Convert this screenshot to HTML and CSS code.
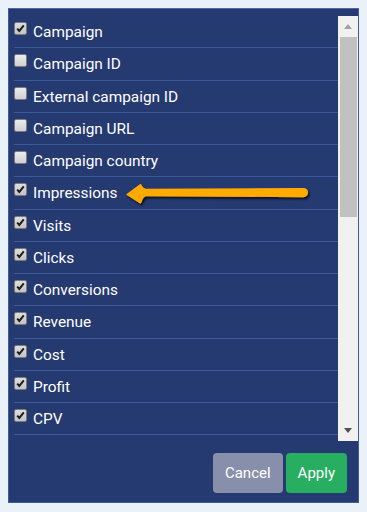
FILE: index.html
```html
<!DOCTYPE html>
<html>
<head>
<meta charset="utf-8">
<link rel="stylesheet" href="styles.css">
</head>
<body>
<div class="panel">
  <div class="body">
    <div class="list">
      <div class="row"><span class="cb on"><svg viewBox="0 0 13 13"><path d="M2.6 6.6 L5.1 9.4 L10.4 2.8"/></svg></span><span class="label">Campaign</span></div>
      <div class="row"><span class="cb"></span><span class="label">Campaign ID</span></div>
      <div class="row"><span class="cb"></span><span class="label">External campaign ID</span></div>
      <div class="row"><span class="cb"></span><span class="label">Campaign URL</span></div>
      <div class="row"><span class="cb"></span><span class="label">Campaign country</span></div>
      <div class="row"><span class="cb on"><svg viewBox="0 0 13 13"><path d="M2.6 6.6 L5.1 9.4 L10.4 2.8"/></svg></span><span class="label">Impressions</span></div>
      <div class="row"><span class="cb on"><svg viewBox="0 0 13 13"><path d="M2.6 6.6 L5.1 9.4 L10.4 2.8"/></svg></span><span class="label">Visits</span></div>
      <div class="row"><span class="cb on"><svg viewBox="0 0 13 13"><path d="M2.6 6.6 L5.1 9.4 L10.4 2.8"/></svg></span><span class="label">Clicks</span></div>
      <div class="row"><span class="cb on"><svg viewBox="0 0 13 13"><path d="M2.6 6.6 L5.1 9.4 L10.4 2.8"/></svg></span><span class="label">Conversions</span></div>
      <div class="row"><span class="cb on"><svg viewBox="0 0 13 13"><path d="M2.6 6.6 L5.1 9.4 L10.4 2.8"/></svg></span><span class="label">Revenue</span></div>
      <div class="row"><span class="cb on"><svg viewBox="0 0 13 13"><path d="M2.6 6.6 L5.1 9.4 L10.4 2.8"/></svg></span><span class="label">Cost</span></div>
      <div class="row"><span class="cb on"><svg viewBox="0 0 13 13"><path d="M2.6 6.6 L5.1 9.4 L10.4 2.8"/></svg></span><span class="label">Profit</span></div>
      <div class="row"><span class="cb on"><svg viewBox="0 0 13 13"><path d="M2.6 6.6 L5.1 9.4 L10.4 2.8"/></svg></span><span class="label">CPV</span></div>
      <div class="row"><span class="cb"></span></div>
    </div>
    <div class="scrollbar">
      <div class="sb-btn"><span class="tri up"></span></div>
      <div class="sb-track"><div class="sb-thumb"></div></div>
      <div class="sb-btn"><span class="tri down"></span></div>
    </div>
  </div>
  <div class="footer">
    <button class="btn cancel">Cancel</button>
    <button class="btn apply">Apply</button>
  </div>
  <svg class="arrow" viewBox="0 0 195 36" width="195" height="36">
    <defs>
      <filter id="sh" x="-10%" y="-40%" width="120%" height="180%">
        <feDropShadow dx="1.5" dy="2" stdDeviation="1.2" flood-color="#000" flood-opacity="0.75"/>
      </filter>
    </defs>
    <path filter="url(#sh)" fill="#ffaa00" d="M6 18.6 L19.5 8.4 Q21.5 7.4 21.8 9.6 Q22.6 11.8 26 12.8 L183.5 12 A4.6 4.6 0 0 1 183.5 21.2 L26 20.2 Q22.6 21.6 21.8 25.6 Q21.4 28.2 19.3 27 Z"/>
  </svg>
</div>
</body>
</html>
```

FILE: styles.css
```css
html, body {
  margin: 0;
  padding: 0;
}
body {
  background: #eaf1f9;
  font-family: Roboto, "Liberation Sans", Arial, sans-serif;
}
.panel {
  position: relative;
  margin: 8px;
  width: 351px;
  height: 495px;
  box-sizing: border-box;
  border: 1px solid #3f5b9b;
  border-top-color: #4c68a6;
  background: #253a70;
  padding: 7px 0 0 5px;
  display: flex;
  flex-direction: column;
}
.body {
  display: flex;
  height: 425px;
}
.list {
  flex: 1;
  overflow: hidden;
}
.row {
  height: 32.27px;
  box-sizing: border-box;
  border-bottom: 1px solid #3d5899;
  padding-top: 6px;
  display: flex;
  align-items: flex-start;
}
.cb {
  width: 13px;
  height: 13px;
  box-sizing: border-box;
  border: 1px solid #7b7b7b;
  border-radius: 2px;
  background: linear-gradient(#ececec, #d0d0d0);
  margin-right: 6px;
  flex: none;
  display: flex;
}
.cb.on {
  background: linear-gradient(#dedede, #c4c4c4);
}
.cb svg {
  width: 11px;
  height: 11px;
}
.cb path {
  fill: none;
  stroke: #1b1b1b;
  stroke-width: 2.3;
}
.label {
  color: #ffffff;
  font-size: 15.4px;
  line-height: 20px;
  white-space: nowrap;
}
.scrollbar {
  width: 20px;
  background: #f1f1f1;
  display: flex;
  flex-direction: column;
}
.sb-btn {
  height: 21px;
  display: flex;
  align-items: center;
  justify-content: center;
  flex: none;
}
.tri {
  width: 0;
  height: 0;
  border-left: 4.5px solid transparent;
  border-right: 4.5px solid transparent;
}
.tri.up {
  border-bottom: 5px solid #a3a3a3;
}
.tri.down {
  border-top: 5px solid #505050;
}
.sb-track {
  flex: 1;
  padding-left: 2px;
}
.sb-thumb {
  width: 17px;
  height: 180px;
  background: #c1c1c1;
}
.footer {
  display: flex;
  justify-content: flex-end;
  gap: 3px;
  padding: 12px 11px 0 0;
}
.btn {
  height: 40px;
  padding: 0 12px;
  border: none;
  border-radius: 4px;
  color: #ffffff;
  font-family: Roboto, "Liberation Sans", Arial, sans-serif;
  font-size: 15px;
}
.cancel {
  background: #878fab;
}
.apply {
  background: #27ae60;
}
.arrow {
  position: absolute;
  left: 111px;
  top: 167px;
}
```
